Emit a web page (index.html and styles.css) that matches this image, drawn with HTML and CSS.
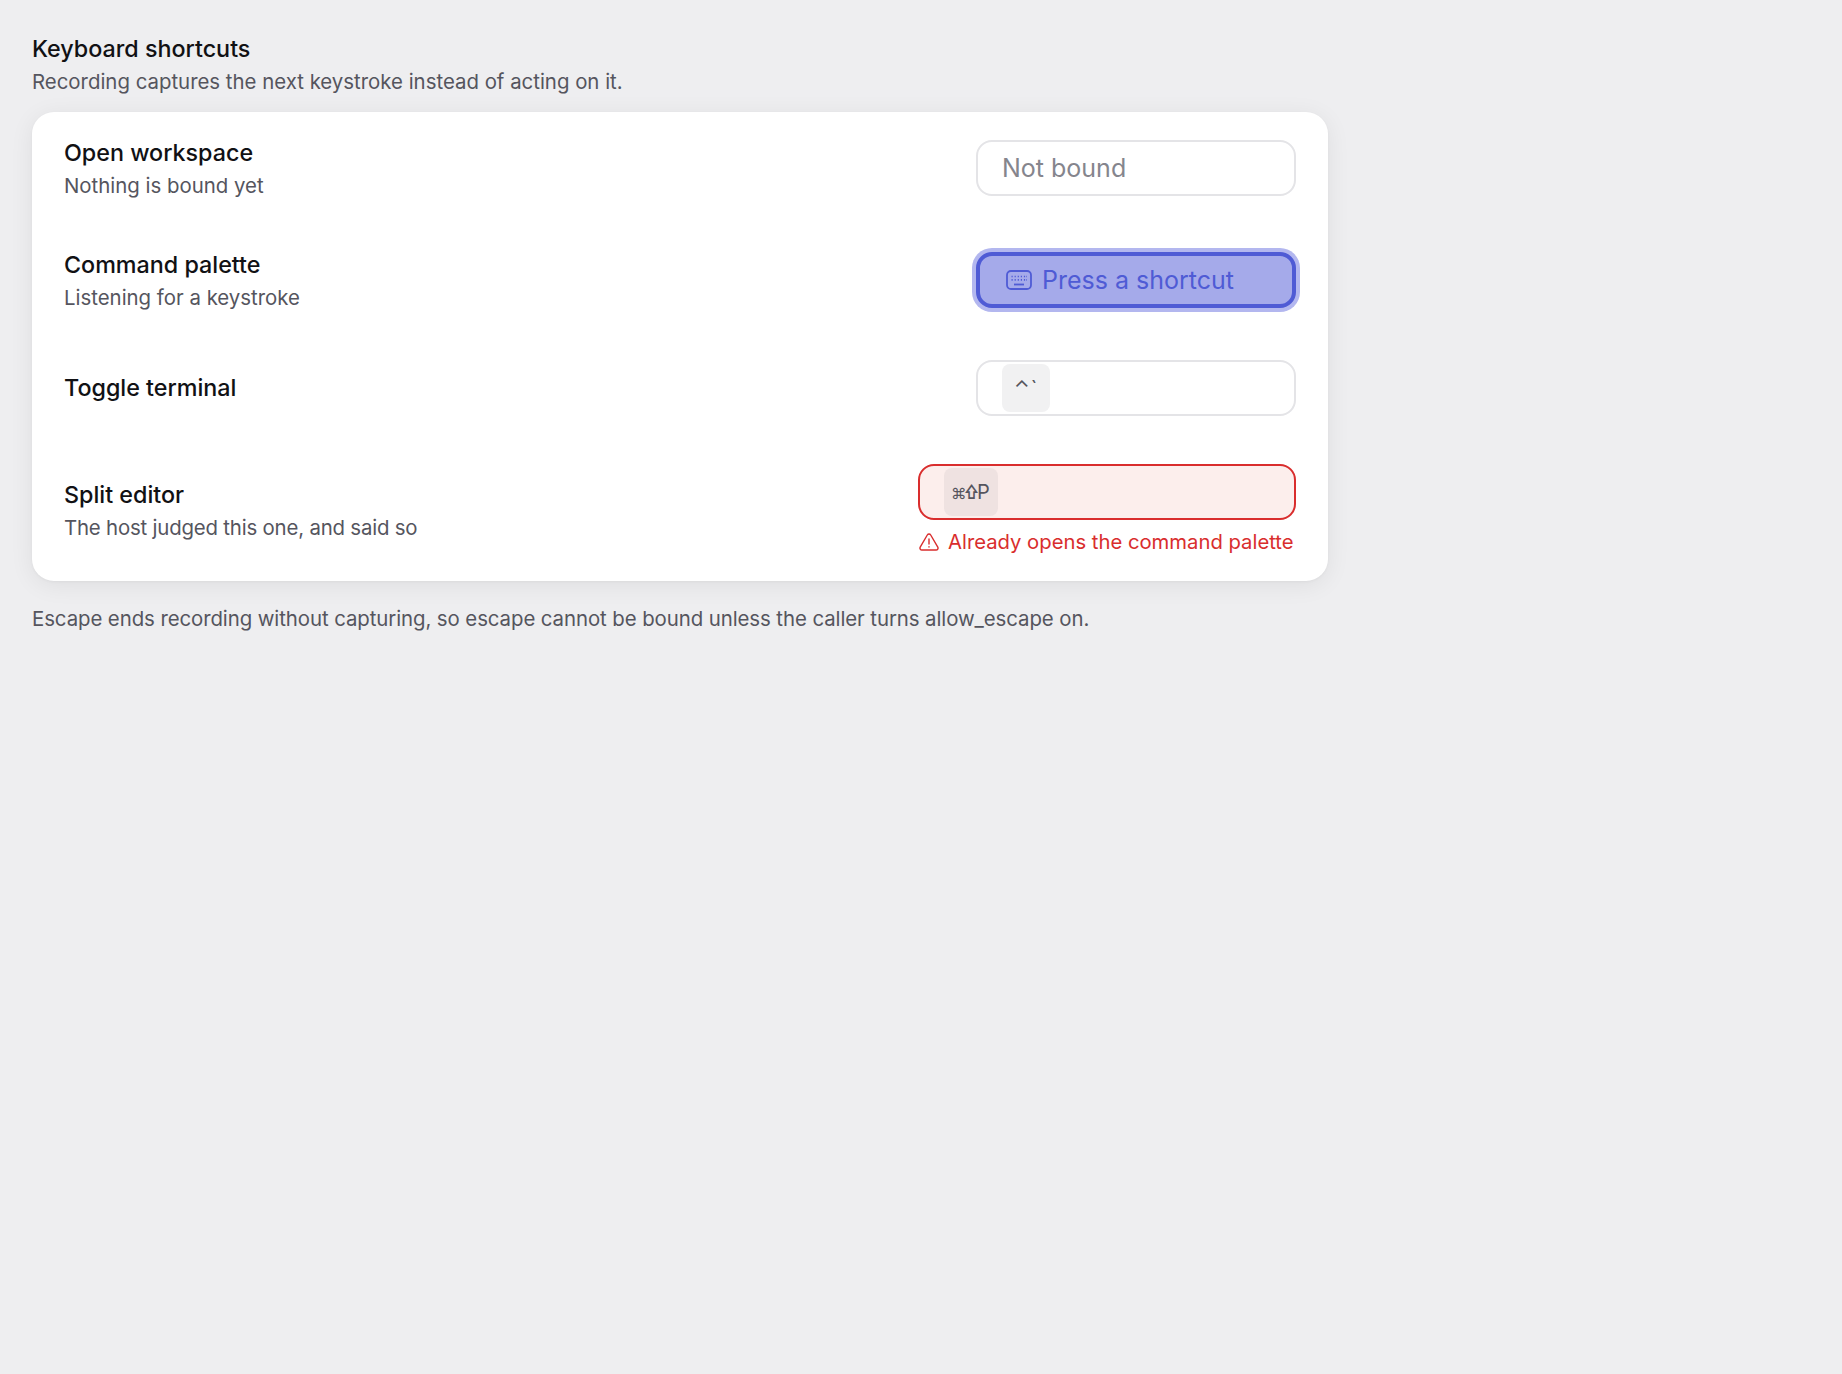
FILE: index.html
```html
<!DOCTYPE html>
<html lang="en">
<head>
    <meta charset="UTF-8">
    <title>Keyboard shortcuts</title>
    <link rel="stylesheet" href="styles.css">
</head>
<body>
    <h1 class="page-title">Keyboard shortcuts</h1>
    <p class="page-sub">Recording captures the next keystroke instead of acting on it.</p>

    <div class="card">
        <div class="row">
            <div class="label">
                <div class="label-title">Open workspace</div>
                <div class="label-sub">Nothing is bound yet</div>
            </div>
            <div class="control">
                <div class="field"><span class="placeholder">Not bound</span></div>
            </div>
        </div>

        <div class="row">
            <div class="label">
                <div class="label-title">Command palette</div>
                <div class="label-sub">Listening for a keystroke</div>
            </div>
            <div class="control">
                <div class="field field-recording">
                    <svg class="kb-icon" viewBox="0 0 26 20" fill="none" stroke="currentColor" stroke-width="1.8">
                        <rect x="1" y="1" width="24" height="18" rx="4"/>
                        <path d="M5.500 6.500h1.200M8.600 6.500h1.200M11.700 6.500h1.200M14.800 6.500h1.200M17.900 6.500h1.200M20.400 6.500h.6M5.500 9.800h1.200M8.600 9.800h1.200M11.700 9.800h1.200M14.800 9.800h1.200M17.900 9.800h1.200M20.400 9.800h.6" stroke-width="1.700"/>
                        <path d="M8 14.500h10"/>
                    </svg>
                    <span>Press a shortcut</span>
                </div>
            </div>
        </div>

        <div class="row row-key">
            <div class="label">
                <div class="label-title">Toggle terminal</div>
            </div>
            <div class="control">
                <div class="field"><kbd class="key key-plain">⌃`</kbd></div>
            </div>
        </div>

        <div class="row">
            <div class="label">
                <div class="label-title">Split editor</div>
                <div class="label-sub label-sub-tight">The host judged this one, and said so</div>
            </div>
            <div class="control">
                <div class="field field-error"><kbd class="key key-error"><span class="sym">⌘</span><span class="sym sym-bold">⇧</span>P</kbd></div>
                <div class="error-msg">
                    <svg class="warn-icon" viewBox="0 0 20 18" fill="none" stroke="currentColor" stroke-width="1.4" stroke-linejoin="round" stroke-linecap="round">
                        <path d="M8.300 2 1.200 14.100c-.7 1.300.2 2.900 1.700 2.900h14.200c1.500 0 2.400-1.600 1.700-2.900L11.700 2c-.8-1.300-2.600-1.300-3.400 0z"/>
                        <path d="M10 6v5M10 13.800v.2"/>
                    </svg>
                    <span>Already opens the command palette</span>
                </div>
            </div>
        </div>
    </div>

    <p class="footnote">Escape ends recording without capturing, so escape cannot be bound unless the caller turns allow_escape on.</p>
</body>
</html>
```

FILE: styles.css
```css
body {
    margin: 0;
    padding: 33px 32px 32px;
    background-color: #eeeef0;
    color: #111114;
    font-family: 'Inter', 'Noto Sans', sans-serif;
}

.page-title {
    margin: 0;
    font-size: 23.3px;
    font-weight: 500;
    line-height: 32px;
}

.page-sub {
    margin: 1px 0 14px;
    font-size: 20.4px;
    line-height: 32px;
    color: #55555e;
}

.card {
    width: 1296px;
    background-color: #fff;
    border-radius: 22px;
    box-shadow: 0 4px 24px rgba(0, 0, 0, 0.07), 0 1px 3px rgba(0, 0, 0, 0.04);
}

.row {
    display: flex;
    justify-content: space-between;
    align-items: center;
    padding: 23.5px 32px;
}

.row-key {
    min-height: 57px;
}

.label-title {
    font-size: 23.3px;
    font-weight: 500;
    line-height: 34px;
}

.label-sub {
    font-size: 20.4px;
    line-height: 31px;
    color: #55555e;
}

.label-sub-tight {
    letter-spacing: -0.19px;
}

.control {
    display: flex;
    flex-direction: column;
    align-items: flex-end;
}

.field {
    box-sizing: border-box;
    display: flex;
    align-items: center;
    gap: 10px;
    width: 320px;
    height: 56px;
    padding: 0 24px;
    border: 2px solid #e4e4e7;
    border-radius: 16px;
    background-color: #fff;
    font-size: 25px;
}

.placeholder {
    color: #85858d;
}

.field-recording {
    padding-left: 26px;
    border: 4px solid #4f5bd5;
    background-color: #a5aaea;
    box-shadow: 0 0 0 4px #b3b7ef;
    color: #4f5bd5;
}

.kb-icon {
    width: 26px;
    height: 20px;
}

.field-error {
    width: 378px;
    border-color: #d92d2d;
    background-color: #fceeec;
}

.key {
    box-sizing: border-box;
    display: block;
    height: 48px;
    padding: 0 12px;
    border-radius: 8px;
    background-color: #f1f1f2;
    color: #55555e;
    font-family: 'Inter', 'DejaVu Sans', sans-serif;
    font-size: 20px;
    line-height: 48px;
}

.key-plain {
    width: 48px;
    letter-spacing: 1px;
}

.key-error {
    width: 54px;
    padding: 0 7px;
    background-color: #efe2e1;
    white-space: nowrap;
}

.sym {
    display: inline-block;
    width: 13px;
    font-size: 15.5px;
}

.sym-bold {
    font-size: 19px;
    font-weight: 700;
    transform: scaleX(0.72);
    transform-origin: left center;
}

.error-msg {
    display: flex;
    align-items: center;
    gap: 9px;
    box-sizing: border-box;
    width: 378px;
    margin: 8px 0 2px;
    padding-left: 1px;
    font-size: 20.25px;
    line-height: 28px;
    white-space: nowrap;
    color: #d92d2d;
}

.warn-icon {
    width: 20px;
    height: 18px;
    flex-shrink: 0;
}

.footnote {
    margin: 22px 0 0;
    font-size: 20.4px;
    letter-spacing: -0.08px;
    line-height: 32px;
    color: #55555e;
}
```
